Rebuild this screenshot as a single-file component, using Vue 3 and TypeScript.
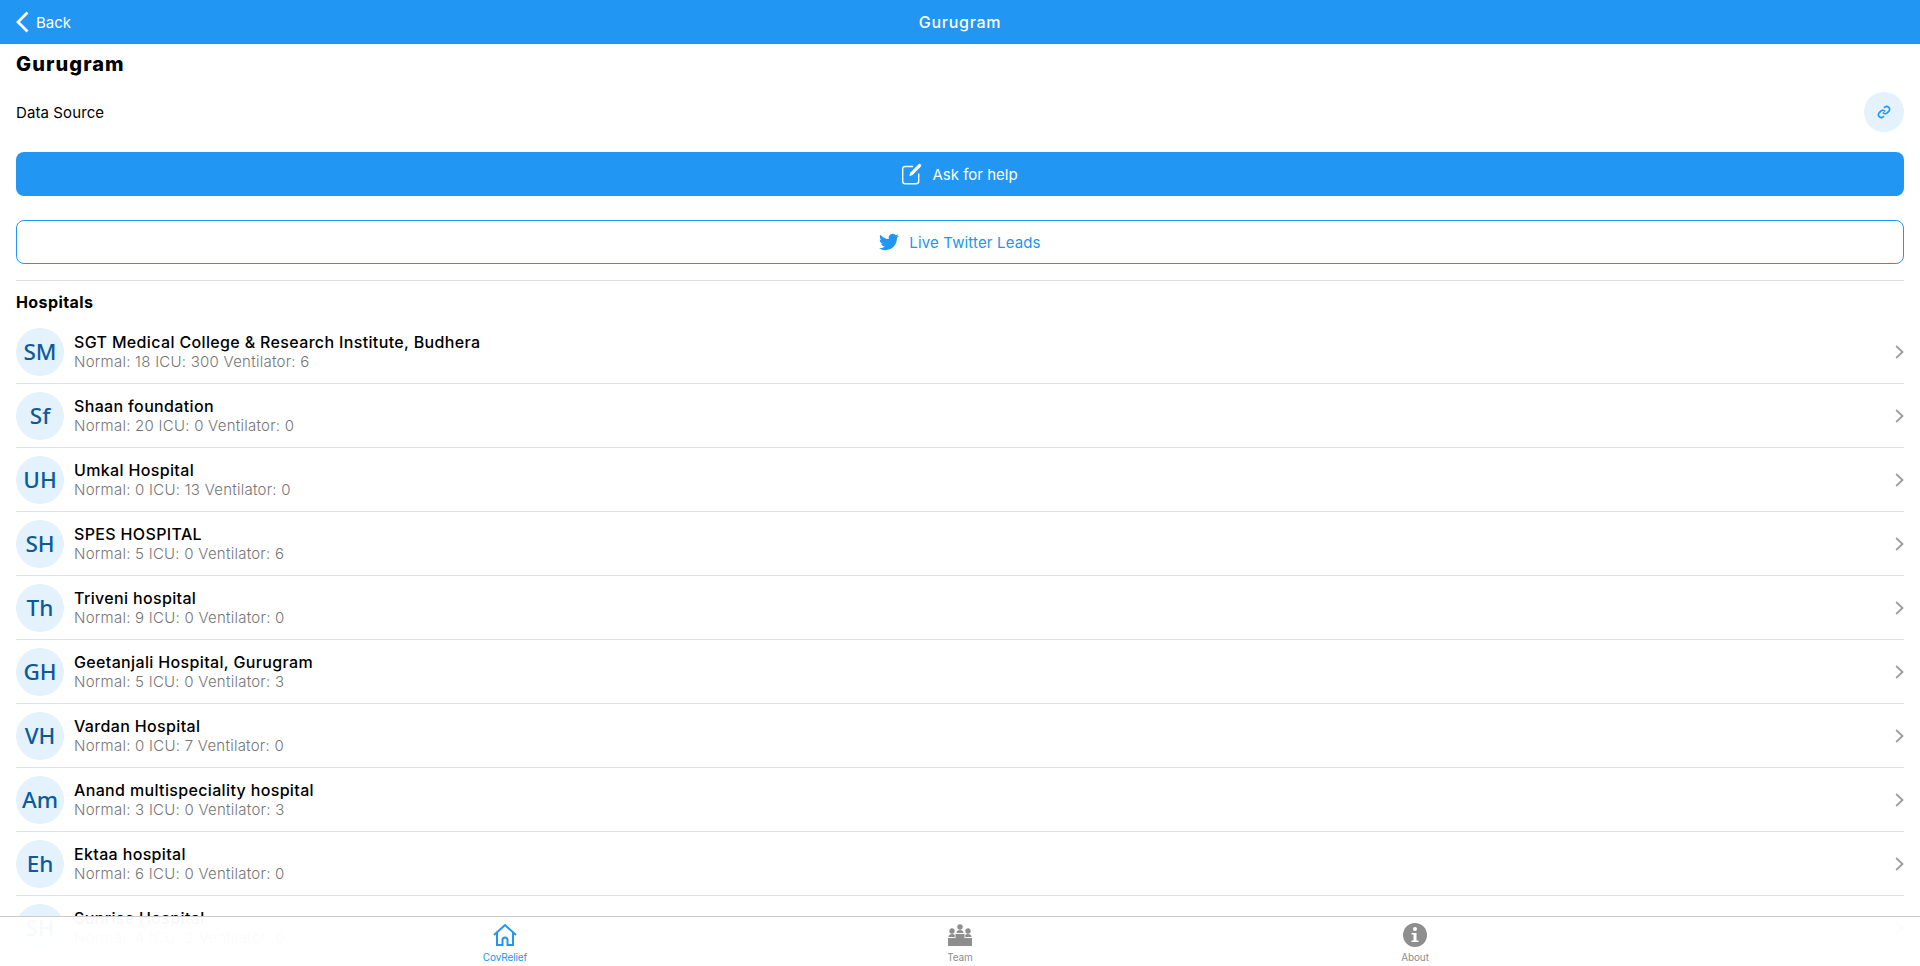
<template>
  <div class="page">
    <header class="topbar">
      <div class="back">
        <svg class="back-icon" viewBox="0 0 13 22"><path d="M11.500 1.500 2 11l9.500 9.500" /></svg>
        <span>Back</span>
      </div>
      <span class="topbar-title">Gurugram</span>
    </header>

    <main class="content">
      <h1 class="city">Gurugram</h1>
      <div class="source-row">
        <span>Data Source</span>
        <button class="link-btn" aria-label="Data source link">
          <svg viewBox="0 0 24 24"><path d="M10 13a5 5 0 0 0 7.500.5l3-3a5 5 0 0 0-7-7l-1.700 1.700" /><path d="M14 11a5 5 0 0 0-7.500-.5l-3 3a5 5 0 0 0 7 7l1.700-1.700" /></svg>
        </button>
      </div>
      <button class="btn btn-solid">
        <svg class="btn-icon edit-icon" viewBox="0 0 20 22"><path d="M16.700 10.500v7.800a2.500 2.500 0 0 1-2.500 2.500H3.200a2.500 2.500 0 0 1-2.500-2.500V6a2.500 2.500 0 0 1 2.500-2.500h8" fill="none" stroke="#fff" stroke-width="1.400" /><path d="M7.300 13.200 8.200 9.700 16.600 1.300a1.500 1.500 0 0 1 2.100 0l.2.200a1.500 1.500 0 0 1 0 2.100L10.500 12z" fill="#fff" /></svg>
        Ask for help
      </button>
      <button class="btn btn-outline">
        <svg class="btn-icon" viewBox="0 0 24 24"><path fill="#2196f3" d="M23.953 4.570a10 10 0 0 1-2.825.775 4.958 4.958 0 0 0 2.163-2.723c-.951.555-2.005.959-3.127 1.184a4.920 4.920 0 0 0-8.384 4.482C7.690 8.095 4.067 6.130 1.640 3.162a4.822 4.822 0 0 0-.666 2.475c0 1.710.870 3.213 2.188 4.096a4.904 4.904 0 0 1-2.228-.616v.060a4.923 4.923 0 0 0 3.946 4.827 4.996 4.996 0 0 1-2.212.085 4.936 4.936 0 0 0 4.604 3.417 9.867 9.867 0 0 1-6.102 2.105c-.390 0-.779-.023-1.170-.067a13.995 13.995 0 0 0 7.557 2.209c9.053 0 13.998-7.496 13.998-13.985 0-.210 0-.420-.015-.630A9.935 9.935 0 0 0 24 4.590z" /></svg>
        <span class="twitter-text">Live Twitter Leads</span>
      </button>
      <hr class="rule" />
      <h2 class="section-title">Hospitals</h2>
      <ul class="list">
        <li v-for="h in hospitals" :key="h.name" class="row">
          <span class="avatar">{{ h.initials }}</span>
          <div class="row-text">
            <span class="row-name">{{ h.name }}</span>
            <span class="row-sub">Normal: {{ h.normal }} ICU: {{ h.icu }} Ventilator: {{ h.vent }}</span>
          </div>
          <svg class="chevron" viewBox="0 0 9 14"><path d="M1.200 1 7.500 7 1.200 13" /></svg>
        </li>
      </ul>
    </main>

    <nav class="tabbar">
      <div class="tabs">
        <div class="tab tab-active">
          <svg viewBox="0 0 24 22"><path d="M1 11 12 1l11 10M4 8.500V21h5.500v-5a2.500 2.500 0 0 1 5 0v5H20V8.500" fill="none" stroke="#2196f3" stroke-width="2" /></svg>
          <span>CovRelief</span>
        </div>
        <div class="tab">
          <svg viewBox="0 0 24 22" fill="#8e8e8e"><circle cx="12" cy="3" r="2.700" /><path d="M8.500 9c0-2 1.500-3 3.500-3s3.500 1 3.500 3z" /><circle cx="4" cy="7" r="2.700" /><path d="M.5 13c0-2 1.500-3 3.500-3 1.200 0 2.200.4 2.800 1v2z" /><circle cx="20" cy="7" r="2.700" /><path d="M23.500 13c0-2-1.500-3-3.500-3-1.200 0-2.200.4-2.800 1v2z" /><path d="M0 14h7.500v-4h9v4H24v8H0z" /></svg>
          <span>Team</span>
        </div>
        <div class="tab">
          <svg viewBox="0 0 24 24"><circle cx="12" cy="12" r="12" fill="#8e8e8e" /><circle cx="12" cy="6" r="2" fill="#fff" /><path d="M8.500 10h5v7.500h2V19h-7v-1.500h2v-6h-2z" fill="#fff" /></svg>
          <span>About</span>
        </div>
      </div>
    </nav>
  </div>
</template>

<script setup lang="ts">
interface Hospital {
  initials: string
  name: string
  normal: number
  icu: number
  vent: number
}

const hospitals: Hospital[] = [
  { initials: 'SM', name: 'SGT Medical College & Research Institute, Budhera', normal: 18, icu: 300, vent: 6 },
  { initials: 'Sf', name: 'Shaan foundation', normal: 20, icu: 0, vent: 0 },
  { initials: 'UH', name: 'Umkal Hospital', normal: 0, icu: 13, vent: 0 },
  { initials: 'SH', name: 'SPES HOSPITAL', normal: 5, icu: 0, vent: 6 },
  { initials: 'Th', name: 'Triveni hospital', normal: 9, icu: 0, vent: 0 },
  { initials: 'GH', name: 'Geetanjali Hospital, Gurugram', normal: 5, icu: 0, vent: 3 },
  { initials: 'VH', name: 'Vardan Hospital', normal: 0, icu: 7, vent: 0 },
  { initials: 'Am', name: 'Anand multispeciality hospital', normal: 3, icu: 0, vent: 3 },
  { initials: 'Eh', name: 'Ektaa hospital', normal: 6, icu: 0, vent: 0 },
  { initials: 'SH', name: 'Sunrise Hospital', normal: 4, icu: 2, vent: 0 }
]
</script>

<style>
html,
body {
  margin: 0;
  height: 100%;
  overflow: hidden;
}
</style>

<style scoped>
.page {
  position: relative;
  height: 966px;
  overflow: hidden;
  background: #fff;
  color: #000;
  font-family: Inter, "Noto Sans", sans-serif;
}

.topbar {
  position: relative;
  height: 44px;
  background: #2196f3;
  color: #fff;
  display: flex;
  align-items: center;
  justify-content: center;
  font-size: 16px;
}

.back {
  position: absolute;
  left: 16px;
  top: 0;
  height: 44px;
  display: flex;
  align-items: center;
  gap: 7px;
  font-size: 15px;
}

.back-icon {
  width: 13px;
  height: 22px;
  fill: none;
  stroke: #fff;
  stroke-width: 2.800;
}

.topbar-title {
  font-weight: 500;
  letter-spacing: 0.7px;
}

.content {
  padding: 0 16px;
}

.city {
  margin: 8px 0 0;
  font-size: 20px;
  line-height: 24px;
  font-weight: 800;
  letter-spacing: 1.1px;
}

.source-row {
  display: flex;
  align-items: center;
  justify-content: space-between;
  height: 40px;
  margin-top: 16px;
  font-size: 15px;
  letter-spacing: 0.1px;
}

.link-btn {
  width: 40px;
  height: 40px;
  padding: 0;
  border: 0;
  border-radius: 50%;
  background: #e3f2fd;
  display: flex;
  align-items: center;
  justify-content: center;
}

.link-btn svg {
  width: 14px;
  height: 14px;
  fill: none;
  stroke: #2196f3;
  stroke-width: 2.800;
}

.btn {
  width: 100%;
  height: 44px;
  display: flex;
  align-items: center;
  justify-content: center;
  gap: 10px;
  border-radius: 8px;
  font-family: inherit;
  font-size: 15px;
  box-sizing: border-box;
}

.btn-icon {
  width: 20px;
  height: 20px;
}

.edit-icon {
  height: 22px;
}

.twitter-text {
  letter-spacing: 0.15px;
}

.btn-solid {
  margin-top: 20px;
  background: #2196f3;
  border: 0;
  color: #fff;
}

.btn-outline {
  margin-top: 24px;
  background: #fff;
  border: 1px solid #2196f3;
  color: #2196f3;
}

.rule {
  margin: 16px 0 0;
  border: 0;
  border-top: 1px solid #ddd;
}

.section-title {
  margin: 11px 0 0;
  font-size: 16px;
  line-height: 20px;
  font-weight: 700;
  letter-spacing: 0.4px;
}

.list {
  list-style: none;
  margin: 8px 0 0;
  padding: 0;
}

.row {
  display: flex;
  align-items: center;
  height: 64px;
  box-sizing: border-box;
  border-bottom: 1px solid #e0e0e0;
}

.avatar {
  width: 48px;
  height: 48px;
  flex: none;
  border-radius: 50%;
  background: #e3f2fd;
  color: #0d5a9b;
  font-family: "Noto Sans", sans-serif;
  font-size: 22.500px;
  font-weight: 500;
  display: flex;
  align-items: center;
  justify-content: center;
}

.row-text {
  flex: 1;
  margin-left: 10px;
  display: flex;
  flex-direction: column;
}

.row-name {
  font-size: 16px;
  line-height: 20px;
  font-weight: 500;
  letter-spacing: 0.35px;
}

.row-sub {
  font-size: 15px;
  line-height: 19px;
  font-weight: 300;
  color: #757575;
  letter-spacing: 0.25px;
}

.chevron {
  width: 9px;
  height: 14px;
  fill: none;
  stroke: #9e9e9e;
  stroke-width: 1.800;
}

.tabbar {
  position: absolute;
  left: 0;
  right: 0;
  bottom: 0;
  height: 50px;
  box-sizing: border-box;
  border-top: 1px solid #ccc;
  background: rgba(255, 255, 255, 0.97);
}

.tabs {
  display: grid;
  grid-template-columns: repeat(3, 455px);
  justify-content: center;
}

.tab {
  display: flex;
  flex-direction: column;
  align-items: center;
  padding-top: 6px;
  font-size: 10px;
  line-height: 14px;
  color: #8e8e8e;
  letter-spacing: -0.1px;
}

.tab svg {
  width: 24px;
  height: 24px;
  margin-bottom: 3px;
}

.tab-active {
  color: #2196f3;
}
</style>
